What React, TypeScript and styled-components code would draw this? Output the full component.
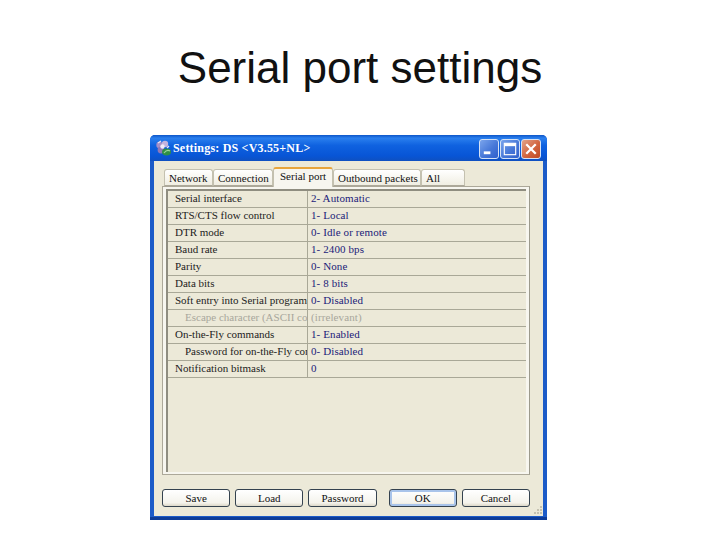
import React from 'react';
import styled, { createGlobalStyle } from 'styled-components';

const rows = [
	{ label: 'Serial interface', value: '2- Automatic' },
	{ label: 'RTS/CTS flow control', value: '1- Local' },
	{ label: 'DTR mode', value: '0- Idle or remote' },
	{ label: 'Baud rate', value: '1- 2400 bps' },
	{ label: 'Parity', value: '0- None' },
	{ label: 'Data bits', value: '1- 8 bits' },
	{ label: 'Soft entry into Serial program', value: '0- Disabled' },
	{ label: 'Escape character (ASCII cod', value: '(irrelevant)', indent: true, muted: true },
	{ label: 'On-the-Fly commands', value: '1- Enabled' },
	{ label: 'Password for on-the-Fly com', value: '0- Disabled', indent: true },
	{ label: 'Notification bitmask', value: '0' },
];

const tabs = [
	{ name: 'Network', width: 49 },
	{ name: 'Connection', width: 60 },
	{ name: 'Serial port', width: 60, active: true },
	{ name: 'Outbound packets', width: 88 },
	{ name: 'All', width: 44 },
];

const buttons = ['Save', 'Load', 'Password', 'OK', 'Cancel'];

export default function App(): JSX.Element {
	return (
		<Page>
			<GlobalStyle />
			<Heading>Serial port settings</Heading>
			<Dialog>
				<TitleBar>
					<svg width="17" height="17" viewBox="0 0 17 17">
						<circle cx="4.5" cy="5" r="3.2" fill="#a58fc8" />
						<circle cx="10" cy="4" r="3.2" fill="#c4b4de" />
						<circle cx="6" cy="10" r="3.4" fill="#8f78b8" />
						<circle cx="7.5" cy="6.5" r="2.2" fill="#f0ecf8" />
						<path d="M3 3 L6 1 M12 8 L14 6" stroke="#e8e4f4" strokeWidth="1.4" />
						<ellipse cx="11.5" cy="12" rx="4.5" ry="3.4" fill="#2f8f46" />
						<path d="M9 13 Q12 9 15 11" stroke="#9ad69c" strokeWidth="1.2" fill="none" />
					</svg>
					<TitleText>Settings: DS &lt;V3.55+NL&gt;</TitleText>
					<Controls>
						<ControlButton>
							<svg viewBox="0 0 19 19">
								<rect x="4" y="12" width="7" height="3" fill="#fff" />
							</svg>
						</ControlButton>
						<ControlButton>
							<svg viewBox="0 0 19 19">
								<rect x="3.5" y="3.5" width="12" height="12" fill="none" stroke="#fff" strokeWidth="1.2" />
								<rect x="3.5" y="3.5" width="12" height="3" fill="#fff" />
							</svg>
						</ControlButton>
						<ControlButton $danger>
							<svg viewBox="0 0 19 19">
								<path d="M4.5 4.5 L14.5 14.5 M14.5 4.5 L4.5 14.5" stroke="#fff" strokeWidth="2.4" />
							</svg>
						</ControlButton>
					</Controls>
				</TitleBar>
				<Client>
					<TabStrip>
						{tabs.map((tab) => (
							<Tab key={tab.name} $active={tab.active} $width={tab.width}>{tab.name}</Tab>
						))}
					</TabStrip>
					<Panel>
						<Grid>
							{rows.map((row) => (
								<Row key={row.label}>
									<Label $indent={row.indent} $muted={row.muted}>{row.label}</Label>
									<Value $muted={row.muted}>{row.value}</Value>
								</Row>
							))}
						</Grid>
					</Panel>
					<ButtonRow>
						{buttons.map((label) => (
							<PushButton key={label} $focused={label === 'OK'}>{label}</PushButton>
						))}
					</ButtonRow>
					<Grip>
						<svg width="12" height="12" viewBox="0 0 12 12">
							<path d="M9 2h2v2H9z M6 5h2v2H6z M9 5h2v2H9z M3 8h2v2H3z M6 8h2v2H6z M9 8h2v2H9z" fill="#c4c1b0" />
						</svg>
					</Grip>
				</Client>
			</Dialog>
		</Page>
	);
}

const GlobalStyle = createGlobalStyle`
	html, body {
		margin: 0;
		padding: 0;
		background: #fff;
	}
`;

const Page = styled.div`
	width: 720px;
	height: 540px;
	overflow: hidden;
	background: #fff;
	box-sizing: border-box;
	padding-top: 41px;
`;

const Heading = styled.h1`
	margin: 0;
	font-family: "Liberation Sans", Arial, sans-serif;
	font-weight: 400;
	font-size: 44px;
	line-height: 54px;
	color: #111;
	text-align: center;
`;

const Dialog = styled.div`
	width: 397px;
	height: 385px;
	margin: 40px 0 0 150px;
	box-sizing: border-box;
	display: flex;
	flex-direction: column;
	background: #1c5bc8;
	border-radius: 5px 5px 0 0;
	border-bottom: 3px solid #0d3c98;
	padding: 0 4px 1px 4px;
	font-family: "Liberation Serif", "DejaVu Serif", serif;
`;

const TitleBar = styled.div`
	height: 26px;
	flex: none;
	margin: 0 -4px;
	padding: 0 6px 0 5px;
	display: flex;
	align-items: center;
	gap: 1px;
	border-radius: 5px 5px 0 0;
	background: linear-gradient(180deg, #0d55c8 0%, #2a7fee 12%, #0f62e0 40%, #0855d6 80%, #0f50c0 100%);
`;

const TitleText = styled.span`
	font-family: "Liberation Serif", "DejaVu Serif", serif;
	font-size: 12px;
	font-weight: 700;
	letter-spacing: 0.2px;
	color: #fff;
	white-space: nowrap;
`;

const Controls = styled.div`
	margin-left: auto;
	display: flex;
	gap: 1px;
	margin-top: 2px;
`;

const ControlButton = styled.div<{ $danger?: boolean }>`
	width: 20px;
	height: 20px;
	box-sizing: border-box;
	display: flex;
	align-items: center;
	justify-content: center;
	border: 1px solid #d5e2f6;
	border-radius: 3px;
	background: ${(p) =>
		p.$danger
			? 'linear-gradient(135deg, #e2a48a 0%, #d2653f 55%, #bd4a26 100%)'
			: 'linear-gradient(135deg, #7aa4ec 0%, #4778d8 55%, #2f5fcc 100%)'};
	svg {
		width: 18px;
		height: 18px;
	}
`;

const Client = styled.div`
	position: relative;
	flex: 1;
	display: flex;
	flex-direction: column;
	background: #ece9d8;
	padding: 8px 13px 0 8px;
`;

const TabStrip = styled.div`
	display: flex;
	align-items: flex-end;
	height: 17px;
	padding-left: 2px;
	position: relative;
	z-index: 1;
`;

const Tab = styled.div<{ $active?: boolean; $width: number }>`
	width: ${(p) => p.$width}px;
	height: ${(p) => (p.$active ? '20px' : '17px')};
	box-sizing: border-box;
	padding: ${(p) => (p.$active ? '0 0 0 6px' : '1px 0 0 4px')};
	margin-bottom: ${(p) => (p.$active ? '-1px' : '0')};
	border: 1px solid #c4c1b0;
	border-bottom: ${(p) => (p.$active ? 'none' : '1px solid #aca899')};
	border-top: ${(p) => (p.$active ? '2px solid #e8a53c' : '1px solid #c4c1b0')};
	border-radius: 3px 3px 0 0;
	background: ${(p) => (p.$active ? '#f7f6ef' : 'linear-gradient(180deg, #fff 0%, #f0eee2 100%)')};
	font-size: 11px;
	line-height: 14px;
	color: #111;
	white-space: nowrap;
`;

const Panel = styled.div`
	height: 289px;
	flex: none;
	box-sizing: border-box;
	border: 1px solid #aca899;
	border-right-color: #9c9a8c;
	background: #f7f6ef;
	padding: 2px 3px 2px 3px;
`;

const Grid = styled.div`
	height: 100%;
	box-sizing: border-box;
	border-top: 2px solid #8f8d80;
	border-left: 2px solid #8f8d80;
	background: #ece9d8;
`;

const Row = styled.div`
	display: grid;
	grid-template-columns: 140px 1fr;
	height: 17px;
	box-sizing: border-box;
	border-bottom: 1px solid #a9a897;
`;

const Label = styled.div<{ $indent?: boolean; $muted?: boolean }>`
	padding-left: ${(p) => (p.$indent ? '17px' : '7px')};
	border-right: 1px solid #a9a897;
	font-size: 11px;
	line-height: 15px;
	color: ${(p) => (p.$muted ? '#a8a79c' : '#1c1c1c')};
	overflow: hidden;
	white-space: nowrap;
`;

const Value = styled.div<{ $muted?: boolean }>`
	padding-left: 3px;
	font-size: 11px;
	line-height: 15px;
	letter-spacing: 0.1px;
	color: ${(p) => (p.$muted ? '#a8a79c' : '#1b1b78')};
	white-space: nowrap;
`;

const ButtonRow = styled.div`
	display: flex;
	gap: 5px;
	padding: 14px 0 0 0;
`;

const PushButton = styled.div<{ $focused?: boolean }>`
	width: 69px;
	height: 18px;
	margin-left: ${(p) => (p.$focused ? '7px' : '0')};
	box-sizing: border-box;
	display: flex;
	align-items: center;
	justify-content: center;
	border: 1px solid #34424f;
	border-radius: 3px;
	background: linear-gradient(180deg, #fff 0%, #f4f3ec 80%, #dcd8c8 100%);
	box-shadow: ${(p) => (p.$focused ? 'inset 0 0 0 2px #a9c4ea' : 'none')};
	font-size: 11px;
	color: #111;
`;

const Grip = styled.div`
	position: absolute;
	right: 0;
	bottom: 0;
	width: 12px;
	height: 12px;
	line-height: 0;
`;
